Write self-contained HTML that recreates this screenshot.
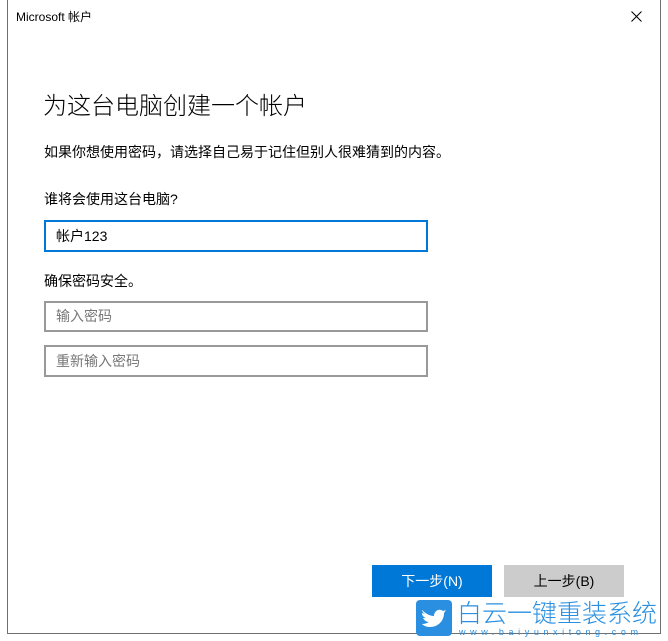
<!DOCTYPE html>
<html><head><meta charset="utf-8"><style>
*{margin:0;padding:0;box-sizing:border-box}
body{width:668px;height:641px;background:#fff;position:relative;overflow:hidden;font-family:"Microsoft YaHei","Liberation Sans","Noto Sans CJK SC",sans-serif;color:#000}
.win{position:absolute;left:7px;top:-1px;width:654px;height:635px;border:1px solid #707070;background:#fff}
.a{position:absolute;white-space:nowrap}
.in{position:absolute;left:44px;width:384px;border:2px solid #999;font-size:14px;padding-left:10px;color:#777}
.btn{position:absolute;top:565px;width:120px;height:32px;font-size:14px;text-align:center;line-height:32px}
</style></head><body>
<div class="win"></div>
<div class="a" style="left:16px;top:8px;font-size:12px">Microsoft 帐户</div>
<svg class="a" style="left:631px;top:11px" width="11" height="11"><path d="M0.5 0.5L10.5 10.5M10.5 0.5L0.5 10.5" stroke="#000" stroke-width="1"/></svg>
<div class="a" style="left:43px;top:86px;font-size:24px;font-weight:300">为这台电脑创建一个帐户</div>
<div class="a" style="left:44px;top:142px;font-size:14px">如果你想使用密码，请选择自己易于记住但别人很难猜到的内容。</div>
<div class="a" style="left:44px;top:189px;font-size:14px">谁将会使用这台电脑?</div>
<div class="in" style="top:220px;height:32px;border-color:#0078d7;color:#000;line-height:28px">帐户123</div>
<div class="a" style="left:44px;top:271px;font-size:14px">确保密码安全。</div>
<div class="in" style="top:301px;height:31px;line-height:27px">输入密码</div>
<div class="in" style="top:345px;height:32px;line-height:28px">重新输入密码</div>
<div class="btn" style="left:372px;background:#0078d7;color:#fff">下一步(N)</div>
<div class="btn" style="left:504px;background:#ccc">上一步(B)</div>
<div class="a" style="left:416px;top:600px;width:36px;height:36px;background:#2a8fe0;border-radius:4px"></div>
<svg class="a" style="left:420px;top:606px" width="28" height="24"><path d="M2 4c4 4 8 6 12 6c0-5 5-8 9-5l3-1-2 3c0 8-6 14-14 14c-3 0-6-1-8-3c3 0 5-1 7-2c-3 0-5-2-6-4h3c-3-1-4-3-4-5l3 1c-3-2-3-4-3-4z" fill="#fff"/></svg>
<div class="a" style="left:457px;top:594px;font-size:25px;color:#2a8fe0;font-weight:300">白云一键重装系统</div>
<div class="a" style="left:459px;top:627px;font-size:9px;color:#2a8fe0;letter-spacing:4.6px">www.baiyunxitong.com</div>
</body></html>
